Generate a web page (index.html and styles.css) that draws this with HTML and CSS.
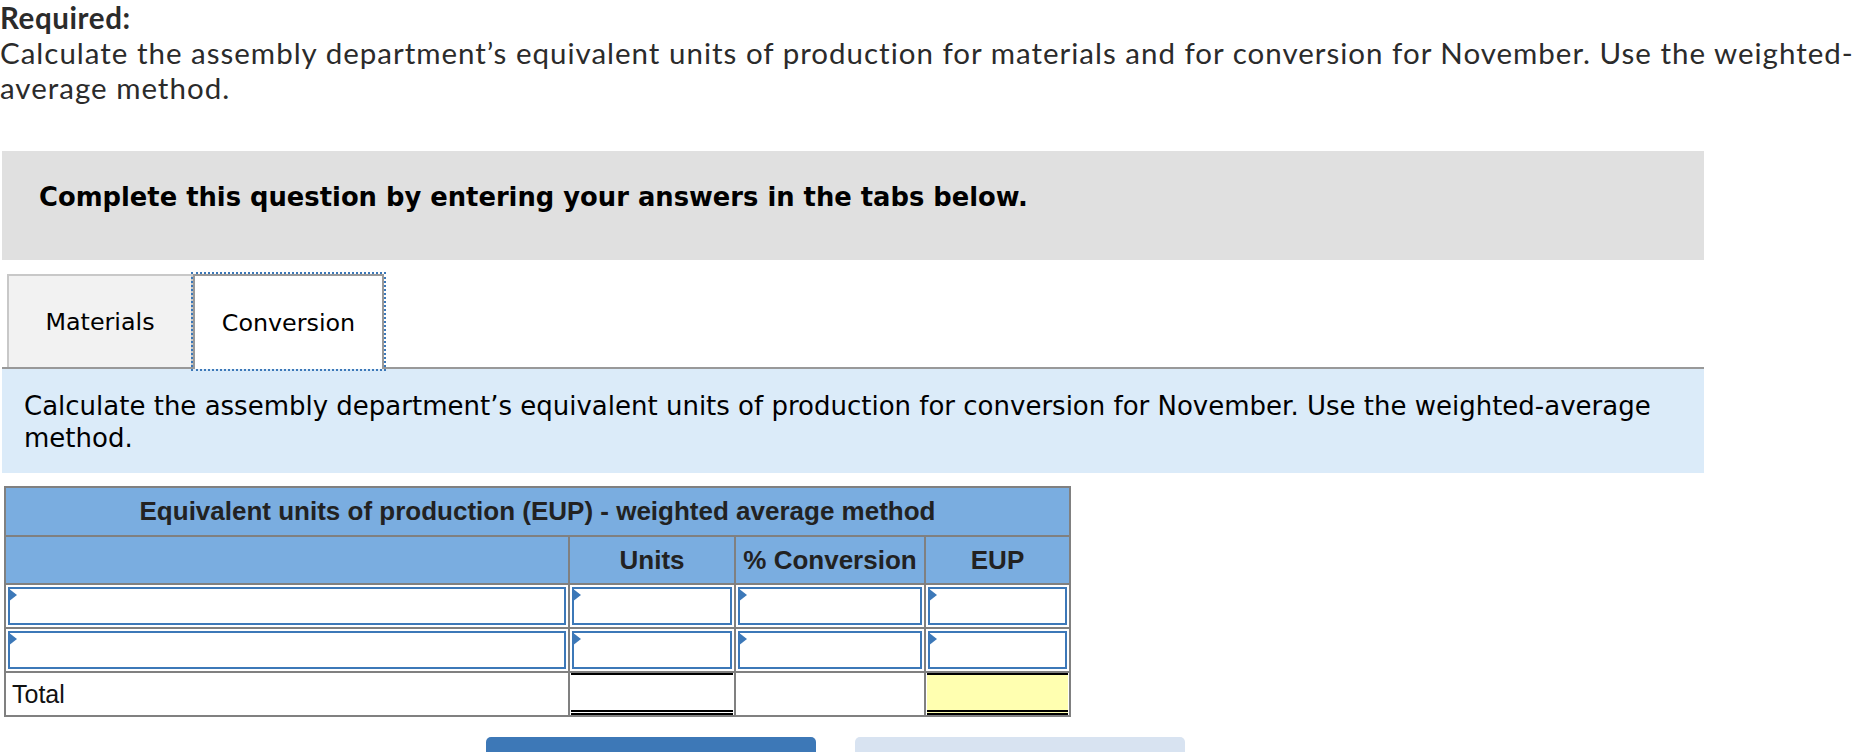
FILE: index.html
```html
<!DOCTYPE html>
<html>
<head>
<meta charset="utf-8">
<link rel="stylesheet" href="styles.css">
</head>
<body>
<div class="required">
  <div class="req-title">Required:</div>
  <div class="req-text">Calculate the assembly department’s equivalent units of production for materials and for conversion for November. Use the weighted-average method.</div>
</div>
<div class="main">
  <div class="instructions">Complete this question by entering your answers in the tabs below.</div>
  <div class="tabs">
    <div class="tab">Materials</div>
    <div class="tab active">Conversion</div>
  </div>
  <div class="info">Calculate the assembly department’s equivalent units of production for conversion for November. Use the weighted-average method.</div>
  <table class="eup">
    <colgroup><col class="c1"><col class="c2"><col class="c3"><col class="c4"></colgroup>
    <tr class="h1"><th colspan="4">Equivalent units of production (EUP) - weighted average method</th></tr>
    <tr class="h2"><th></th><th>Units</th><th>% Conversion</th><th>EUP</th></tr>
    <tr class="in"><td><div class="inp"></div></td><td><div class="inp"></div></td><td><div class="inp"></div></td><td><div class="inp"></div></td></tr>
    <tr class="in"><td><div class="inp"></div></td><td><div class="inp"></div></td><td><div class="inp"></div></td><td><div class="inp"></div></td></tr>
    <tr class="tot"><td class="label">Total</td><td><div class="sum"></div></td><td></td><td><div class="sum yellow"></div></td></tr>
  </table>
  <div class="buttons">
    <div class="btn prev"></div>
    <div class="btn next"></div>
  </div>
</div>
</body>
</html>
```
FILE: styles.css
```css
html, body {
  margin: 0;
  background: #fff;
}
body {
  overflow: hidden;
}
.required {
  font-family: Lato, "Open Sans", sans-serif;
  font-size: 29.5px;
  line-height: 35px;
  letter-spacing: 1px;
  color: #2b2b2b;
}
.req-title {
  font-weight: 700;
  letter-spacing: 0.6px;
}
.main {
  margin-left: 2px;
  width: 1702px;
  margin-top: 46px;
}
.instructions {
  background: #e0e0e0;
  height: 109px;
  box-sizing: border-box;
  padding: 30px 37px;
  font-family: "DejaVu Sans", Verdana, sans-serif;
  font-weight: 700;
  font-size: 25.8px;
  line-height: 32px;
  color: #000;
}
.tabs {
  display: flex;
  margin-top: 14px;
  padding-left: 5px;
  height: 93px;
  border-bottom: 2px solid #999;
}
.tab {
  width: 186px;
  box-sizing: border-box;
  border: 2px solid #c8c8c8;
  border-bottom: none;
  background: #f2f2f2;
  display: flex;
  align-items: center;
  justify-content: center;
  font-family: "DejaVu Sans", Verdana, sans-serif;
  font-size: 23.8px;
  color: #000;
}
.tab.active {
  width: 191px;
  background: #fff;
  border-color: #999;
  outline: 2px dotted #3c78b8;
  position: relative;
  z-index: 1;
  height: 95px;
}
.info {
  background: #dbebf9;
  padding: 21px 22px 19px;
  font-family: "DejaVu Sans", Verdana, sans-serif;
  font-size: 26px;
  line-height: 32px;
  color: #000;
}
.eup {
  margin-top: 13px;
  margin-left: 2px;
  border-collapse: collapse;
  table-layout: fixed;
  width: 1065px;
  font-family: "Liberation Sans", Arial, sans-serif;
  color: #222;
}
.c1 { width: 564px; }
.c2 { width: 166px; }
.c3 { width: 190px; }
.c4 { width: 145px; }
.eup th, .eup td {
  border: 2px solid #808080;
  padding: 0;
}
.eup th {
  background: #7aade0;
  font-weight: 700;
  font-size: 26px;
  text-align: center;
}
.h1 th { height: 47px; }
.h2 th { height: 46px; }
.in td {
  padding: 2px 2px;
  height: 38px;
}
.inp {
  position: relative;
  height: 34px;
  border: 2px solid #3c78b8;
  background: #fff;
}
.inp::before {
  content: "";
  position: absolute;
  left: -2px;
  top: -1px;
  border-left: 9px solid #3c78b8;
  border-top: 7px solid transparent;
  border-bottom: 7px solid transparent;
}
.tot td {
  height: 42px;
  font-size: 25px;
  vertical-align: middle;
}
.tot td.label {
  padding-left: 6px;
  color: #111;
}
.sum {
  height: 35px;
  margin: 0 1px;
  border-top: 2px solid #000;
  border-bottom: 5px double #000;
  background: #fff;
}
.sum.yellow {
  background: #ffffb0;
}
.buttons {
  display: flex;
  gap: 39px;
  padding-left: 484px;
  margin-top: 20px;
}
.btn {
  width: 330px;
  height: 46px;
  border-radius: 5px 5px 0 0;
}
.prev { background: #3d78b7; }
.next { background: #d8e3f1; }
```
